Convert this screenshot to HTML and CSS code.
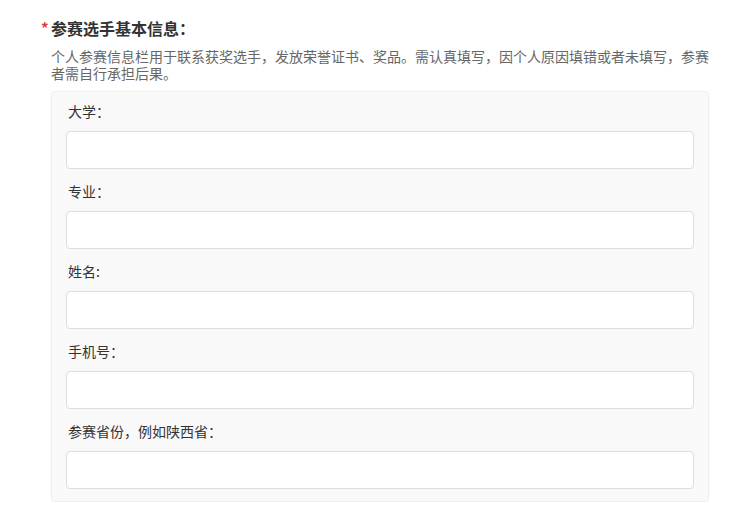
FILE: index.html
```html
<!DOCTYPE html>
<html lang="zh-CN">
<head>
    <meta charset="UTF-8">
    <meta name="viewport" content="width=device-width, initial-scale=1.0">
    <title>参赛选手基本信息</title>
    <link rel="stylesheet" href="styles.css">
</head>
<body>
    <div class="section">
        <h2 class="title"><span class="required">*</span>参赛选手基本信息：</h2>
        <p class="desc">个人参赛信息栏用于联系获奖选手，发放荣誉证书、奖品。需认真填写，因个人原因填错或者未填写，参赛者需自行承担后果。</p>

        <div class="panel">
            <div class="field">
                <label for="school">大学：</label>
                <input type="text" id="school">
            </div>
            <div class="field">
                <label for="major">专业：</label>
                <input type="text" id="major">
            </div>
            <div class="field">
                <label for="name">姓名:</label>
                <input type="text" id="name">
            </div>
            <div class="field">
                <label for="phone">手机号：</label>
                <input type="text" id="phone">
            </div>
            <div class="field">
                <label for="province">参赛省份，例如陕西省：</label>
                <input type="text" id="province">
            </div>
        </div>
    </div>
</body>
</html>
```

FILE: styles.css
```css
body {
    margin: 0;
    font-family: "Noto Sans CJK SC", "Microsoft YaHei", sans-serif;
    color: #333;
    background: #fff;
}

.section {
    padding: 18px 0 0 41px;
}

.title {
    margin: 0;
    height: 20px;
    font-size: 16px;
    line-height: 20px;
    font-weight: bold;
    color: #333;
}

.required {
    display: inline-block;
    width: 10px;
    color: #e4393c;
    font-size: 15px;
    line-height: 20px;
    vertical-align: top;
}

.desc {
    margin: 10px 0 0 10px;
    width: 658px;
    font-size: 14px;
    line-height: 17px;
    color: #666;
}

.panel {
    box-sizing: border-box;
    width: 658px;
    margin: 9px 0 0 10px;
    padding: 9px 14px 12px;
    background: #f9f9f9;
    border: 1px solid #eee;
    border-radius: 4px;
}

.field {
    display: flex;
    flex-direction: column;
}

.field + .field {
    margin-top: 12px;
}

.field label {
    margin-left: 2px;
    font-size: 14px;
    line-height: 20px;
    color: #333;
}

.field input {
    box-sizing: border-box;
    height: 38px;
    margin-top: 10px;
    padding: 0 10px;
    border: 1px solid #ddd;
    border-radius: 4px;
    background: #fff;
    font-size: 14px;
}

.field input:focus {
    outline: none;
    border-color: #bbb;
}
```
